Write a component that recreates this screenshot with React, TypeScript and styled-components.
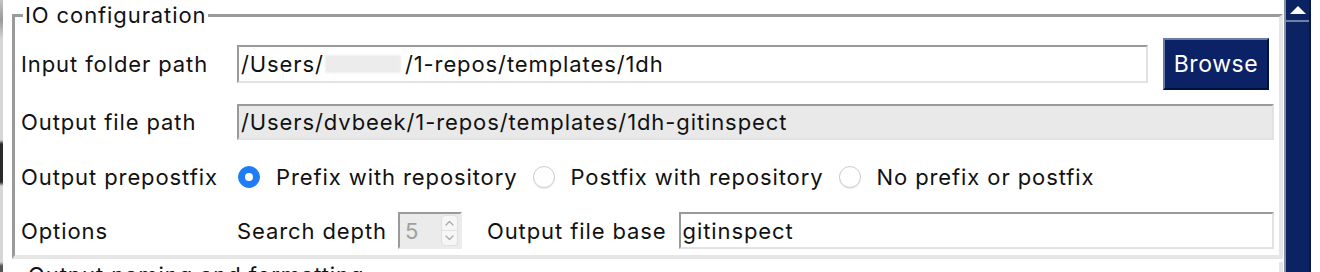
import React from 'react';
import styled, { createGlobalStyle } from 'styled-components';

const GlobalStyle = createGlobalStyle`
  html, body {
    margin: 0;
    padding: 0;
    background: #ffffff;
    overflow: hidden;
  }
  body {
    font-family: 'Inter', 'Liberation Sans', sans-serif;
    font-size: 22px;
    letter-spacing: 0.9px;
    color: #111111;
  }
`;

const Window = styled.div`
  display: flex;
  height: 272px;
  overflow: hidden;
`;

const LeftEdge = styled.div`
  width: 3px;
  flex-shrink: 0;
  background: linear-gradient(
    to bottom,
    #c4c4c4 0,
    #9a9a9a 20px,
    #d6d6d6 40px,
    #d6d6d6 140px,
    #2a2a2a 144px,
    #2a2a2a 182px,
    #d6d6d6 186px,
    #d6d6d6 262px,
    #555555 266px
  );
`;

const Main = styled.div`
  width: 1271px;
  flex-shrink: 0;
  padding: 2px 1px 0 9px;
  display: flex;
  flex-direction: column;
`;

const Group = styled.fieldset`
  margin: 0;
  min-width: 0;
  padding: 10px 5px 6px 6px;
  border-style: solid;
  border-width: 3px 4px 4px 3px;
  border-color: #9a9a9a #e6e6e6 #e6e6e6 #9a9a9a;
`;

const Legend = styled.legend`
  margin-left: 2px;
  padding: 0 2px;
  line-height: 26px;
  font-size: 22px;
  color: #111111;
`;

const Row = styled.div<{ $h: number; $mt?: number }>`
  display: flex;
  align-items: center;
  height: ${(p) => p.$h}px;
  margin-top: ${(p) => p.$mt ?? 0}px;
`;

const Label = styled.div`
  width: 216px;
  flex-shrink: 0;
  white-space: nowrap;
`;

const TextField = styled.div<{ $disabled?: boolean; $h: number }>`
  flex: 1;
  min-width: 0;
  height: ${(p) => p.$h}px;
  box-sizing: border-box;
  display: flex;
  align-items: center;
  padding-left: 2px;
  border-style: solid;
  border-width: 2px;
  border-color: #9a9a9a #e2e2e2 #e2e2e2 #9a9a9a;
  background: ${(p) => (p.$disabled ? '#e9e9e9' : '#ffffff')};
  white-space: nowrap;
  overflow: hidden;
`;

const Redacted = styled.span`
  display: inline-block;
  width: 76px;
  height: 18px;
  margin: 0 4px 0 1px;
  background: #ececec;
  border-radius: 2px;
  filter: blur(1px);
`;

const BrowseButton = styled.button`
  margin-left: 15px;
  margin-right: 5px;
  width: 106px;
  height: 52px;
  flex-shrink: 0;
  box-sizing: border-box;
  font-family: inherit;
  font-size: 23px;
  letter-spacing: 0.6px;
  color: #ffffff;
  background: #0b2266;
  border-style: solid;
  border-width: 2px;
  border-color: #6a7ca6 #00113f #00113f #6a7ca6;
  padding: 0;
  cursor: pointer;
`;

const RadioGroup = styled.div`
  display: flex;
  align-items: center;
`;

const RadioOption = styled.label`
  display: flex;
  align-items: center;
  margin-right: 14px;
  white-space: nowrap;
`;

const RadioDot = styled.span<{ $checked?: boolean }>`
  width: 22px;
  height: 22px;
  box-sizing: border-box;
  border-radius: 50%;
  margin-right: 16px;
  margin-left: 1px;
  display: flex;
  align-items: center;
  justify-content: center;
  background: ${(p) => (p.$checked ? '#1f7cf6' : '#ffffff')};
  border: 1px solid ${(p) => (p.$checked ? '#1f7cf6' : '#cdcdcd')};
  box-shadow: ${(p) => (p.$checked ? 'none' : '0 1px 1px rgba(0,0,0,0.08)')};

  &::after {
    content: '';
    display: ${(p) => (p.$checked ? 'block' : 'none')};
    width: 8px;
    height: 8px;
    border-radius: 50%;
    background: #ffffff;
  }
`;

const InlineLabel = styled.span<{ $gap: number }>`
  white-space: nowrap;
  margin-right: ${(p) => p.$gap}px;
`;

const Spinner = styled.div`
  width: 64px;
  height: 37px;
  flex-shrink: 0;
  box-sizing: border-box;
  display: flex;
  align-items: center;
  justify-content: space-between;
  padding: 0 2px 0 5px;
  border-style: solid;
  border-width: 2px;
  border-color: #9a9a9a #ececec #ececec #9a9a9a;
  background: #ebebeb;
  color: #a0a0a0;
  margin-right: 25px;
`;

const SpinArrows = styled.div`
  width: 17px;
  height: 31px;
  box-sizing: border-box;
  display: flex;
  flex-direction: column;
  border-radius: 4px;
  background: #f6f6f6;
  border: 1px solid #e0e0e0;
  overflow: hidden;
`;

const SpinHalf = styled.div<{ $top?: boolean }>`
  flex: 1;
  display: flex;
  align-items: center;
  justify-content: center;
  border-bottom: ${(p) => (p.$top ? '1px solid #e0e0e0' : 'none')};
`;

const NextGroup = styled.div`
  flex: 1;
  border-right: 4px solid #e6e6e6;
  padding-left: 16px;
  line-height: 26px;
  white-space: nowrap;
  margin-top: 3px;
`;

const Scrollbar = styled.div`
  width: 23px;
  flex-shrink: 0;
  background: #0b2263;
  border-left: 2px solid #8a8fa0;
  border-right: 2px solid #061847;
  display: flex;
  flex-direction: column;
`;

const ScrollUp = styled.div`
  height: 20px;
  display: flex;
  align-items: center;
  justify-content: center;
  border-bottom: 2px solid #6f80a8;
`;

const Chevron = ({ up }: { up?: boolean }) => (
  <svg width="9" height="6" viewBox="0 0 9 6">
    <path
      d={up ? 'M1 5 L4.5 1.5 L8 5' : 'M1 1 L4.5 4.5 L8 1'}
      fill="none"
      stroke="#a8a8a8"
      strokeWidth="1.2"
      strokeLinecap="round"
      strokeLinejoin="round"
    />
  </svg>
);

const UpTriangle = () => (
  <svg width="16" height="8" viewBox="0 0 16 8">
    <polygon points="8,0 16,8 0,8" fill="#ffffff" />
  </svg>
);

const App = () => {
  return (
    <>
      <GlobalStyle />
      <Window>
        <LeftEdge />
        <Main>
          <Group>
            <Legend>IO configuration</Legend>
            <Row $h={52}>
              <Label>Input folder path</Label>
              <TextField $h={38}>
                /Users/
                <Redacted />
                /1-repos/templates/1dh
              </TextField>
              <BrowseButton>Browse</BrowseButton>
            </Row>
            <Row $h={36} $mt={14}>
              <Label>Output file path</Label>
              <TextField $h={36} $disabled>
                /Users/dvbeek/1-repos/templates/1dh-gitinspect
              </TextField>
            </Row>
            <Row $h={46} $mt={14}>
              <Label>Output prepostfix</Label>
              <RadioGroup>
                <RadioOption>
                  <RadioDot $checked />
                  Prefix with repository
                </RadioOption>
                <RadioOption>
                  <RadioDot />
                  Postfix with repository
                </RadioOption>
                <RadioOption>
                  <RadioDot />
                  No prefix or postfix
                </RadioOption>
              </RadioGroup>
            </Row>
            <Row $h={37} $mt={12}>
              <Label>Options</Label>
              <InlineLabel $gap={11}>Search depth</InlineLabel>
              <Spinner>
                5
                <SpinArrows>
                  <SpinHalf $top>
                    <Chevron up />
                  </SpinHalf>
                  <SpinHalf>
                    <Chevron />
                  </SpinHalf>
                </SpinArrows>
              </Spinner>
              <InlineLabel $gap={12}>Output file base</InlineLabel>
              <TextField $h={37}>gitinspect</TextField>
            </Row>
          </Group>
          <NextGroup>Output naming and formatting</NextGroup>
        </Main>
        <Scrollbar>
          <ScrollUp>
            <UpTriangle />
          </ScrollUp>
        </Scrollbar>
      </Window>
    </>
  );
};

export default App;
